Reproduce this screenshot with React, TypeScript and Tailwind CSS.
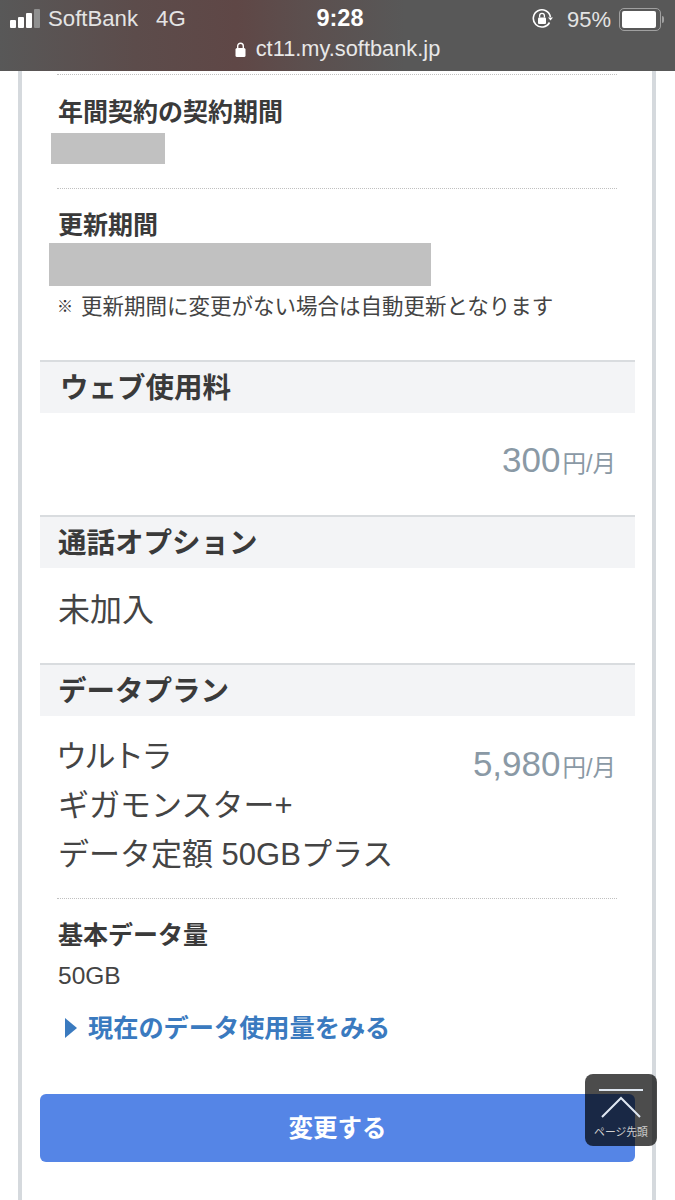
const font = "font-['Liberation_Sans','Noto_Sans_CJK_JP',sans-serif]";

function SignalBars() {
  return (
    <div className="flex items-end gap-[2px]">
      <span className="h-[8px] w-[6px] rounded-[1px] bg-white" />
      <span className="h-[11px] w-[6px] rounded-[1px] bg-white" />
      <span className="h-[15px] w-[6px] rounded-[1px] bg-white" />
      <span className="h-[19px] w-[6px] rounded-[1px] bg-[#8f8f8f]" />
    </div>
  );
}

function RotationLock() {
  return (
    <svg width="22" height="22" viewBox="0 0 22 22" fill="none">
      <path d="M18.5 14.500A8.600 8.600 0 1 1 19.400 9" stroke="white" strokeWidth="1.6" />
      <path d="M17 9.500h5l-2.500 3z" fill="white" />
      <rect x="7" y="9.500" width="8" height="6.500" rx="1" fill="white" />
      <path d="M8.600 9.500V7.800a2.400 2.400 0 0 1 4.800 0v1.700" stroke="white" strokeWidth="1.300" />
    </svg>
  );
}

function Battery() {
  return (
    <div className="flex items-center">
      <div className="h-[23px] w-[42px] rounded-[5px] border border-[#a0a0a0] p-[2px]">
        <div className="h-full w-[94%] rounded-[2px] bg-white" />
      </div>
      <span className="ml-[1px] h-[7px] w-[2px] rounded-r-sm bg-[#a0a0a0]" />
    </div>
  );
}

function Dotted() {
  return <div className="border-t border-dotted border-[#c0c0c0]" />;
}

function SectionHead({ label, indent }: { label: string; indent: string }) {
  return (
    <div className={`flex h-[53px] items-center border-t-2 border-[#d9dcdf] bg-[#f3f4f6] pt-[2px] text-[28.500px] font-bold text-[#3a3a3a] ${indent}`}>
      {label}
    </div>
  );
}

function Price({ value }: { value: string }) {
  return (
    <p className="flex items-baseline text-[#8a99a5]">
      <span className="text-[35px] leading-none">{value}</span>
      <span className="ml-[2px] text-[23.500px] leading-none">円/月</span>
    </p>
  );
}

export default function App() {
  return (
    <div className={`${font} flex h-[1200px] w-[675px] flex-col overflow-hidden bg-white text-[#3a3a3a]`}>
      <header className="h-[71px] shrink-0 bg-[linear-gradient(90deg,#585858_0%,#5c4c4b_20%,#5f4746_35%,#5c4f4e_45%,#585858_60%)] text-white">
        <div className="flex h-[38px] items-center justify-between pl-[10px] pr-[11px]">
          <div className="flex w-[220px] items-center text-[22.200px] text-[#e4e4e4]">
            <SignalBars />
            <span className="ml-[8px]">SoftBank</span>
            <span className="ml-[18px]">4G</span>
          </div>
          <span className="ml-[6px] text-[23.500px] font-bold">9:28</span>
          <div className="flex w-[220px] items-center justify-end text-[22px] text-[#e4e4e4]">
            <RotationLock />
            <span className="ml-[14px] mr-[8px]">95%</span>
            <Battery />
          </div>
        </div>
        <div className="flex items-center justify-center gap-[10px] text-[21.800px] leading-[22px] text-[#e8e8e8]">
          <svg width="11" height="15" viewBox="0 0 11 15" fill="none">
            <rect x="0.500" y="6" width="10" height="9" rx="1.500" fill="white" />
            <path d="M2.700 6.500V4a2.800 2.800 0 0 1 5.600 0v2.500" stroke="white" strokeWidth="1.400" />
          </svg>
          <span>ct11.my.softbank.jp</span>
        </div>
      </header>

      <main className="relative ml-[18px] w-[638px] flex-1 border-x-4 border-[#d5d9dd] pl-[18px] pr-[17px] pt-[3px]">
        <div className="pl-[17px] pr-[18px]">
          <Dotted />
          <h3 className="ml-[1px] mt-[21px] text-[25px] font-bold leading-[32px]">年間契約の契約期間</h3>
          <div className="ml-[-6px] mt-[5px] h-[31px] w-[114px] bg-[#c1c1c1]" />
          <div className="mt-[24px]"><Dotted /></div>
          <h3 className="ml-[1px] mt-[20px] text-[25px] font-bold leading-[32px]">更新期間</h3>
          <div className="ml-[-8px] mt-[2px] h-[43px] w-[382px] bg-[#c1c1c1]" />
          <p className="mt-[5px] flex h-[32px] items-center text-[21.500px] text-[#444]">
            <span className="mr-[8px] text-[16px] text-[#333]">※</span>
            更新期間に変更がない場合は自動更新となります
          </p>
        </div>

        <div className="mt-[37px]">
          <SectionHead label="ウェブ使用料" indent="pl-[20px]" />
        </div>
        <div className="flex h-[102px] justify-end pr-[19px] pt-[29px]">
          <Price value="300" />
        </div>

        <SectionHead label="通話オプション" indent="pl-[18px]" />
        <p className="flex h-[95px] items-center pb-[12px] pl-[18px] text-[32px] text-[#444]">未加入</p>

        <SectionHead label="データプラン" indent="pl-[18px]" />
        <div className="flex justify-between pl-[18px] pr-[19px] pt-[16px]">
          <div className="text-[31px] leading-[49px] text-[#444]">
            <p className="ml-[-2px] tracking-[-2.500px]">ウルトラ</p>
            <p>ギガモンスター+</p>
            <p>データ定額 50GBプラス</p>
          </div>
          <div className="pt-[14px]">
            <Price value="5,980" />
          </div>
        </div>

        <div className="pl-[17px] pr-[18px]">
          <div className="mt-[19px]"><Dotted /></div>
          <h3 className="ml-[1px] mt-[20px] text-[25px] font-bold leading-[32px]">基本データ量</h3>
          <p className="ml-[1px] mt-[9px] text-[24.500px] leading-[32px] text-[#444]">50GB</p>
          <a className="ml-[8px] mt-[20px] flex items-center text-[25.200px] font-bold leading-[32px] text-[#3a7abf]">
            <svg width="12" height="20" viewBox="0 0 12 20" className="mr-[11px]">
              <path d="M0 0l12 10L0 20z" fill="#3a7abf" />
            </svg>
            現在のデータ使用量をみる
          </a>
        </div>

        <button className="mt-[50px] flex h-[68px] w-full items-center justify-center rounded-[6px] bg-[#5585e6] pt-[2px] text-[24.500px] font-bold text-white">
          変更する
        </button>

        <div className="absolute left-[563px] top-[1003px] flex h-[72px] w-[72px] flex-col items-center rounded-[8px] bg-black/70 pt-[15px]">
          <svg width="46" height="30" viewBox="0 0 46 30" fill="none" stroke="#dfe7f2" strokeWidth="2">
            <path d="M1 1h44" />
            <path d="M4 28L23 9l19 19" />
          </svg>
          <span className="mt-[5px] text-[10.800px] leading-[16px] text-[#d0d0d0]">ページ先頭</span>
        </div>
      </main>
    </div>
  );
}
